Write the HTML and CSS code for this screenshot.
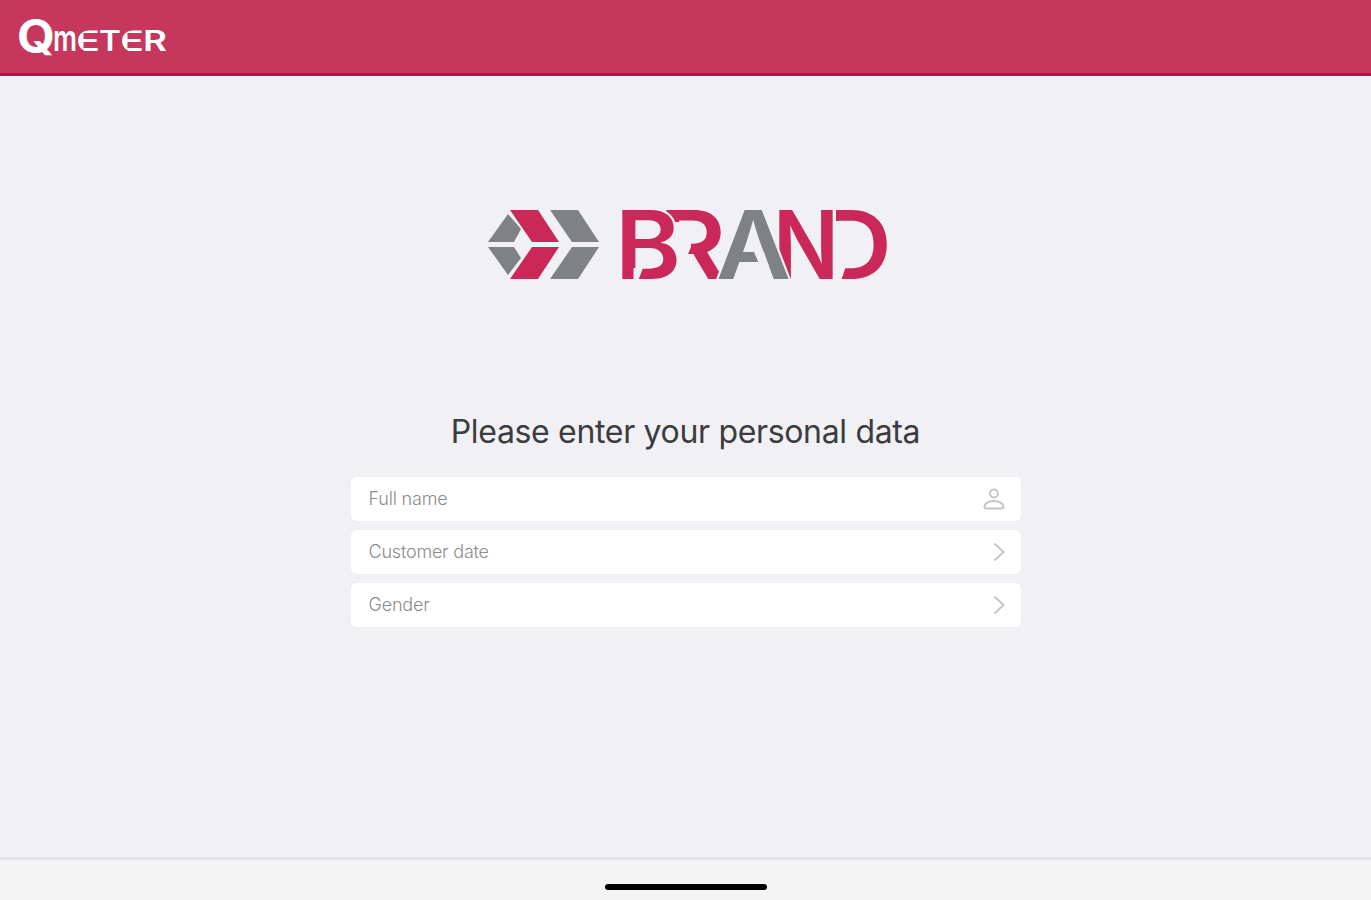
FILE: index.html
```html
<!DOCTYPE html>
<html lang="en">
<head>
  <meta charset="UTF-8" />
  <meta name="viewport" content="width=device-width, initial-scale=1" />
  <title>Qmeter</title>
  <link rel="stylesheet" href="styles.css">
</head>
<body>
  <header>
    <svg class="qmeter" viewBox="0 0 150 40" role="img" aria-label="Qmeter">
      <defs>
        <clipPath id="round-e1"><rect x="60" y="12.5" width="34" height="21" rx="10" /></clipPath>
        <clipPath id="round-e2"><rect x="104" y="12.5" width="34" height="21" rx="10" /></clipPath>
      </defs>
      <text class="q" x="-1" y="35" textLength="38" lengthAdjust="spacingAndGlyphs">Q</text>
      <text class="m" x="35" y="33" textLength="24" lengthAdjust="spacingAndGlyphs">m</text>
      <text x="57" y="33" textLength="25" lengthAdjust="spacingAndGlyphs" clip-path="url(#round-e1)">E</text>
      <text x="81" y="33" textLength="22" lengthAdjust="spacingAndGlyphs">T</text>
      <text x="101" y="33" textLength="25" lengthAdjust="spacingAndGlyphs" clip-path="url(#round-e2)">E</text>
      <text x="125" y="33" textLength="24" lengthAdjust="spacingAndGlyphs">R</text>
    </svg>
  </header>

  <main>
    <svg class="brand" viewBox="0 0 400 72" role="img" aria-label="Brand">
      <defs>
        <clipPath id="cut-r"><path d="M177 0H240V72H213L198 50 203 38V13H186Z" /></clipPath>
        <clipPath id="cut-d"><path d="M348 0H402V72H353L358 57H363V12H348Z" /></clipPath>
      </defs>
      <g class="grey">
        <path d="M0 33 20 5 33 20 26 33Z" />
        <path d="M0 38H26L33 49 20 66Z" />
        <path d="M62 1H90L111 33H84Z" />
        <path d="M84 38H111L90 70H62Z" />
      </g>
      <g class="red">
        <path d="M22 1H50L71 33H44Z" />
        <path d="M44 38H71L50 70H22Z" />
      </g>
      <g clip-path="url(#cut-r)">
        <text class="red" x="170" y="70" textLength="68" lengthAdjust="spacingAndGlyphs">R</text>
      </g>
      <text class="red edge" x="127" y="70" textLength="66" lengthAdjust="spacingAndGlyphs">B</text>
      <path class="cut" d="M145.500 59H155L150 72H145.500Z" />
      <text class="red" x="285" y="70" textLength="66" lengthAdjust="spacingAndGlyphs">N</text>
      <text class="grey edge" x="228" y="70" textLength="75" lengthAdjust="spacingAndGlyphs">A</text>
      <path class="cut" d="M266 43H276L281 57H272Z" />
      <g clip-path="url(#cut-d)">
        <text class="red" x="330" y="70" textLength="74" lengthAdjust="spacingAndGlyphs">D</text>
      </g>
    </svg>

    <h1>Please enter your personal data</h1>

    <div class="form">
      <div class="field">
        <span>Full name</span>
        <svg class="user" viewBox="0 0 22 22">
          <circle cx="11" cy="5.500" r="4" />
          <path d="M7 13.500Q11 12.500 15 13.500Q20 15 20.500 18.500Q20.500 20.500 18.500 20.500H3.500Q1.500 20.500 1.500 18.500Q2 15 7 13.500Z" />
        </svg>
      </div>
      <div class="field">
        <span>Customer date</span>
        <svg class="chevron" viewBox="0 0 12 20"><path d="M1.500 1.500 10.500 10 1.500 18.500" /></svg>
      </div>
      <div class="field">
        <span>Gender</span>
        <svg class="chevron" viewBox="0 0 12 20"><path d="M1.500 1.500 10.500 10 1.500 18.500" /></svg>
      </div>
    </div>
  </main>

  <footer>
    <div class="home-bar"></div>
  </footer>
</body>
</html>
```
FILE: styles.css
```css
* { box-sizing: border-box; }

body {
  margin: 0;
  font-family: Inter, sans-serif;
  background: #f1f0f5;
  height: 100vh;
  display: flex;
  flex-direction: column;
  overflow: hidden;
}

header {
  height: 76px;
  padding: 18px;
  background: #c5375d;
  border-bottom: 3px solid #bd0a47;
}

.qmeter {
  display: block;
  width: 150px;
  height: 40px;
  fill: #fff;
  font-size: 28px;
  font-weight: 600;
}

.qmeter .q {
  font-size: 46px;
  font-weight: 700;
}

.qmeter .m {
  font-size: 36px;
}

main {
  flex-grow: 1;
  display: flex;
  flex-direction: column;
  align-items: center;
  padding-top: 133px;
}

.brand {
  width: 400px;
  height: 72px;
  margin-left: 5px;
  font-size: 95px;
  font-weight: 600;
  overflow: visible;
}

.red { fill: #c92859; }
.grey { fill: #7f8283; }
.cut { fill: #f1f0f5; }

.edge {
  stroke: #f1f0f5;
  stroke-width: 4;
  paint-order: stroke;
}

h1 {
  margin: 131px 0 0;
  font-size: 32px;
  line-height: 40px;
  font-weight: 400;
  letter-spacing: -0.33px;
  color: #3c3c40;
}

.form {
  width: 670px;
  margin-top: 25px;
  display: flex;
  flex-direction: column;
  gap: 9px;
}

.field {
  height: 44px;
  padding: 0 16px 0 18px;
  display: flex;
  align-items: center;
  justify-content: space-between;
  background: #fff;
  border-radius: 5px;
  box-shadow: 0 0 1px #dddde2;
  font-size: 18px;
  line-height: 22px;
  font-weight: 300;
  letter-spacing: -0.2px;
  color: #8c8c8c;
}

.field span {
  padding-bottom: 1px;
}

.field svg {
  fill: none;
  stroke: #c6c6c6;
  stroke-width: 2;
}

.user {
  width: 22px;
  height: 22px;
}

.chevron {
  width: 12px;
  height: 20px;
}

footer {
  height: 43px;
  border-top: 3px solid #e3e2e6;
  background: #f4f4f4;
  display: flex;
  justify-content: center;
  padding: 24px 0 0 1px;
}

.home-bar {
  width: 162px;
  height: 6px;
  border-radius: 3px;
  background: #000;
}
```
